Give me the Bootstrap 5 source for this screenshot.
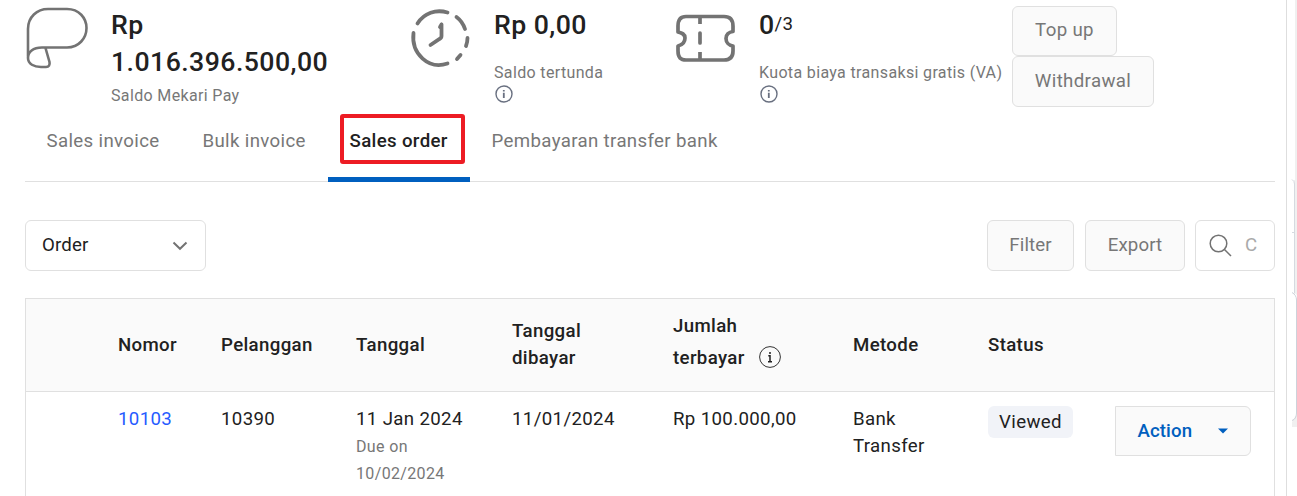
<!DOCTYPE html>
<html lang="id">
<head>
<meta charset="utf-8">
<title>Mekari Pay</title>
<link href="https://cdn.jsdelivr.net/npm/bootstrap@5.3.0/dist/css/bootstrap.min.css" rel="stylesheet">
<script src="https://cdn.jsdelivr.net/npm/bootstrap@5.3.0/dist/js/bootstrap.bundle.min.js"></script>
<style>
body{font-family:Roboto,sans-serif;font-size:18.67px;line-height:27px;letter-spacing:.35px;color:#212121;height:496px;overflow:hidden;background:#fff}
.panel{width:1287px;height:496px;border-right:1px solid #dedede;padding:0 11px 0 25px;overflow:hidden}
.summary{height:106px}
.amount{font-size:26.67px;font-weight:500;line-height:37px;letter-spacing:.45px;padding-top:7px}
.caption{font-size:16px;color:#777;line-height:24px;letter-spacing:.35px}
.quota{font-size:18.67px;font-weight:400;vertical-align:4px;letter-spacing:.3px;line-height:1}
.btn-soft{--bs-btn-color:#777;--bs-btn-bg:#fafafa;--bs-btn-border-color:#e0e0e0;--bs-btn-font-size:18.67px;--bs-btn-border-radius:6px;--bs-btn-padding-x:0;--bs-btn-padding-y:0;height:51px;line-height:44px;padding-bottom:2px;letter-spacing:.35px;white-space:nowrap;flex-shrink:0}
.tools .btn-soft{letter-spacing:.1px}
.tabs{height:76px;border-bottom:1px solid #e0e0e0}
.tabs .nav-link{color:#777;padding:0 21.5px;height:76px;line-height:70px;letter-spacing:.35px;white-space:nowrap}
.tabs .nav-link.active{color:#212121;font-weight:500;border-bottom:5px solid #005fbf}
.marker{position:absolute;left:11.5px;top:8px;width:125px;height:50px;border:4.500px solid #ed1c24;border-radius:3px}
.field{height:51px;border:1px solid #e0e0e0;border-radius:6px}
.orders{table-layout:fixed;width:1250px;height:300px;border:1px solid #e0e0e0}
.orders th{font-weight:500;height:93px;background:#fafafa;border-bottom:1px solid #e0e0e0;vertical-align:middle;padding:0 0 0 .5px}
.orders th.paid{line-height:32px;padding-bottom:6px}
.orders td{vertical-align:top;padding:14px 0 0 .5px}
.orders td:nth-child(n+8){padding-left:0}
.status{background:#f1f3f8;border-radius:6px;height:32px;width:85px;line-height:32px;padding-left:1px}
.btn-action{--bs-btn-color:#005fbf;--bs-btn-font-weight:500;--bs-btn-padding-x:22px;width:136px;border-radius:0 6px 6px 0;height:50px;padding-bottom:0;letter-spacing:.1px}
</style>
</head>
<body>
<div class="d-flex">
<main class="panel flex-shrink-0">
  <section class="summary d-flex">
    <svg width="86" height="72" viewBox="25 0 86 72" fill="none" stroke="#737373" stroke-width="2.6" stroke-linejoin="round" class="flex-shrink-0"><path d="M28 56V29C28 17 37 9 48 9H67C79 9 86.500 18 86.500 28S79 47.500 67 47.500H42C33 47.500 28 52 28 58C28 64 34 67 41 67H46C49 67 50 65 49.500 62L45.500 48"/></svg>
    <div class="flex-shrink-0" style="width:298px"><div class="amount">Rp<br>1.016.396.500,00</div><div class="caption" style="padding-top:3px">Saldo Mekari Pay</div></div>
    <svg width="85" height="72" viewBox="409 0 85 72" fill="none" stroke="#737373" stroke-width="3.800" stroke-linecap="round" class="flex-shrink-0"><path d="M417.500 23.500C424 13 436 9 447.500 12.500M413.500 33C411 54 429 70 447.500 63.500M456.500 17Q462.500 21.500 465 29M467.500 38Q467.500 42 466 46M460.500 55L457 59M441.500 24.500V36Q441.500 38 439.500 39L430.500 45M440 27l1.500-2.500"/></svg>
    <div class="flex-shrink-0" style="width:181px"><div class="amount">Rp 0,00</div><div class="caption" style="padding-top:17px">Saldo tertunda</div>
      <svg class="d-block" width="18" height="18" viewBox="0 0 18 18" style="margin-left:1px"><circle cx="9" cy="9" r="8" fill="none" stroke="#697080" stroke-width="1.400"/><path d="M8.800 5V6.500M8.800 7.700V13" stroke="#697080" stroke-width="1.800"/></svg></div>
    <svg width="84" height="72" viewBox="675 0 84 72" fill="none" stroke="#737373" stroke-width="3.700" stroke-linecap="round" stroke-linejoin="round" class="flex-shrink-0"><path d="M686 16.500H724C730 16.500 733 20 733 26V31.500C729 32 726 34.500 726 38.500S729 45.500 733 46V51C733 57 730 60 724 60H686C680 60 678 57 678 51V46C682 45 685 42 685 38S682 33 678 32V26C678 20 680 16.500 686 16.500Z"/><path stroke-linecap="butt" d="M700 17V24M700 52V60"/><path d="M700 33V43"/></svg>
    <div class="flex-shrink-0" style="width:253px"><div class="amount">0<span class="quota">/3</span></div><div class="caption text-nowrap" style="padding-top:17px">Kuota biaya transaksi gratis (VA)</div>
      <svg class="d-block" width="18" height="18" viewBox="0 0 18 18" style="margin-left:1px"><circle cx="9" cy="9" r="8" fill="none" stroke="#697080" stroke-width="1.400"/><path d="M8.800 5V6.500M8.800 7.700V13" stroke="#697080" stroke-width="1.800"/></svg></div>
    <div class="d-flex flex-column align-items-start" style="padding-top:6px"><button class="btn btn-soft" style="width:105px;height:50px">Top up</button><button class="btn btn-soft" style="width:142px">Withdrawal</button></div>
  </section>
  <nav class="tabs nav flex-nowrap">
    <a class="nav-link" style="width:156px" href="#">Sales invoice</a>
    <a class="nav-link" style="width:147px" href="#">Bulk invoice</a>
    <a class="nav-link active position-relative" style="width:142px" href="#">Sales order<span class="marker"></span></a>
    <a class="nav-link" href="#">Pembayaran transfer bank</a>
  </nav>
  <div class="tools d-flex justify-content-between" style="padding:38px 0 27px">
    <div class="field d-flex align-items-center justify-content-between" style="width:181px;padding:0 17px 1px 16px"><span style="letter-spacing:.15px">Order</span><svg width="16" height="12" viewBox="0 0 16 12" fill="none" stroke="#737373" stroke-width="2" style="margin-top:2px"><path d="M1.500 2.500L8 8.800L14.500 2.500"/></svg></div>
    <div class="d-flex"><button class="btn btn-soft" style="width:87px;margin-right:11px">Filter</button><button class="btn btn-soft" style="width:100px;margin-right:10px">Export</button>
      <div class="field d-flex align-items-center" style="width:80px;padding-left:13px"><svg width="24" height="24" viewBox="0 0 24 24" fill="none" stroke="#737373" stroke-width="1.500"><circle cx="9.500" cy="9.500" r="8.300"/><path d="M15.500 15.500L22 22"/></svg><span style="color:#aaa;margin-left:12px">C</span></div></div>
  </div>
  <table class="orders">
    <colgroup><col style="width:92px"><col style="width:103px"><col style="width:135px"><col style="width:156px"><col style="width:161px"><col style="width:180px"><col style="width:135px"><col style="width:127px"><col></colgroup>
    <thead><tr><th></th><th>Nomor</th><th>Pelanggan</th><th>Tanggal</th><th>Tanggal<br>dibayar</th><th class="paid">Jumlah<br>terbayar<svg width="24" height="24" viewBox="0 0 24 24" style="margin-left:13px;vertical-align:-5px"><circle cx="12" cy="12" r="10.400" fill="none" stroke="#333" stroke-width="1"/><path d="M12 7V9M10.300 10.800H12V16.500M10 16.700H14" fill="none" stroke="#212121" stroke-width="1.500"/></svg></th><th>Metode</th><th>Status</th><th></th></tr></thead>
    <tbody><tr><td></td><td><a href="#" class="text-decoration-none" style="color:#265bff">10103</a></td><td>10390</td><td>11 Jan 2024<div class="caption" style="line-height:27px">Due on<br>10/02/2024</div></td><td>11/01/2024</td><td>Rp 100.000,00</td><td>Bank<br>Transfer</td><td><div class="status text-center">Viewed</div></td><td><button class="btn btn-soft btn-action d-flex align-items-center justify-content-between">Action<svg width="10" height="6" viewBox="0 0 10 6"><path d="M0 .5H10L5 5.500Z" fill="#005fbf"/></svg></button></td></tr></tbody>
  </table>
</main>
<aside class="flex-shrink-0">
  <svg class="d-block" width="10" height="428" viewBox="1287 0 10 428" fill="none"><path d="M1295 0H1297V296L1295 292ZM1294 180H1295.500V294H1294ZM1292 427V422L1296 415H1297V427Z" fill="#f0f0f0"/><path d="M1292 179.500Q1294.500 181 1294.500 184V293M1292 232.500H1294.500" stroke="#d5dae0"/><path d="M1292 292.500Q1296.500 295 1296.500 300V413Q1296.500 419 1292 420.500" stroke="#cdd2da"/></svg>
</aside>
</div>
</body>
</html>
